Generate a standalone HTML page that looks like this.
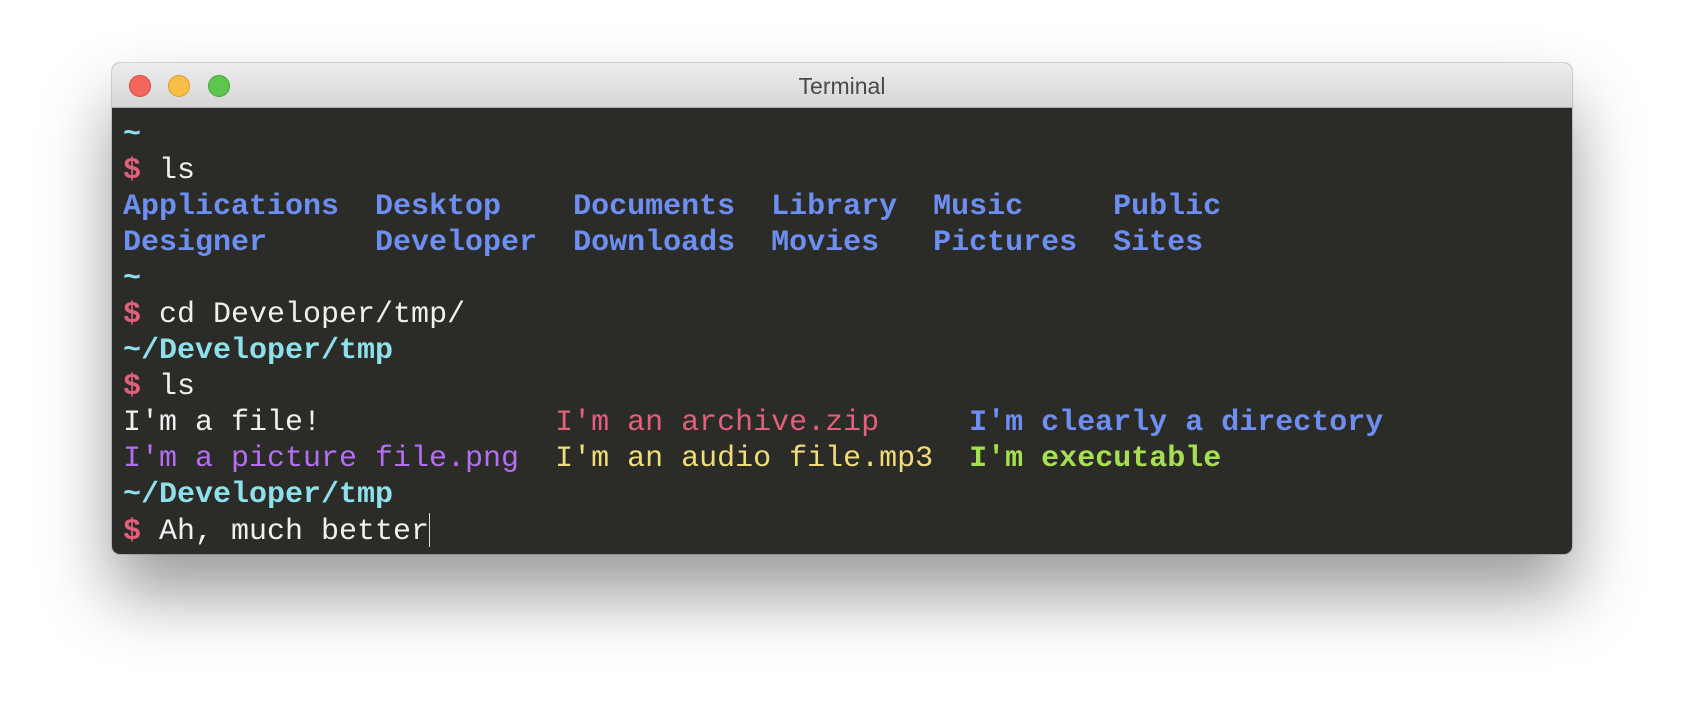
<!DOCTYPE html>
<html><head><meta charset="utf-8"><style>
html,body{margin:0;padding:0;background:#fff;width:1684px;height:714px;overflow:hidden}
.win{position:absolute;left:112px;top:63px;width:1460px;height:491px;border-radius:8px;overflow:hidden;background:#2b2b27;box-shadow:0 40px 70px rgba(0,0,0,0.4),0 0 0 1px rgba(0,0,0,0.15)}
.tb{height:44px;background:linear-gradient(#ececec,#d6d6d6);border-bottom:1px solid #a8a8a8;position:relative;font-family:"Liberation Sans",sans-serif;font-size:23px;color:#4a4a4a;text-align:center;line-height:46px}
.dot{position:absolute;top:12px;width:22px;height:22px;border-radius:50%;box-sizing:border-box}
pre{margin:0;padding:9px 0 0 11px;font-family:"Liberation Mono",monospace;font-size:30px;line-height:36px;color:#f0f0f0}
b{font-weight:bold}
.c{color:#8ee0ea;font-weight:bold}.r{color:#e2607a}.d{color:#6e8ff2;font-weight:bold}
.p{color:#b36ef2}.y{color:#f0dc78}.g{color:#a6e052;font-weight:bold}
.cur{display:inline-block;width:1px;height:34px;background:#ddd;vertical-align:-8px}
</style></head><body>
<div class="win">
<div class="tb">Terminal
<div class="dot" style="left:17px;background:#f2665c;border:1px solid #d9463c"></div>
<div class="dot" style="left:56px;background:#f7bd45;border:1px solid #dc9e2a"></div>
<div class="dot" style="left:96px;background:#5ec64d;border:1px solid #43a537"></div>
</div>
<pre><span class="c">~</span>
<b class="r">$</b> ls
<span class="d">Applications  Desktop    Documents  Library  Music     Public</span>
<span class="d">Designer      Developer  Downloads  Movies   Pictures  Sites</span>
<span class="c">~</span>
<b class="r">$</b> cd Developer/tmp/
<span class="c">~/Developer/tmp</span>
<b class="r">$</b> ls
I'm a file!             <span class="r">I'm an archive.zip</span>     <span class="d">I'm clearly a directory</span>
<span class="p">I'm a picture file.png</span>  <span class="y">I'm an audio file.mp3</span>  <span class="g">I'm executable</span>
<span class="c">~/Developer/tmp</span>
<b class="r">$</b> Ah, much better<span class="cur"></span></pre>
</div>
</body></html>
